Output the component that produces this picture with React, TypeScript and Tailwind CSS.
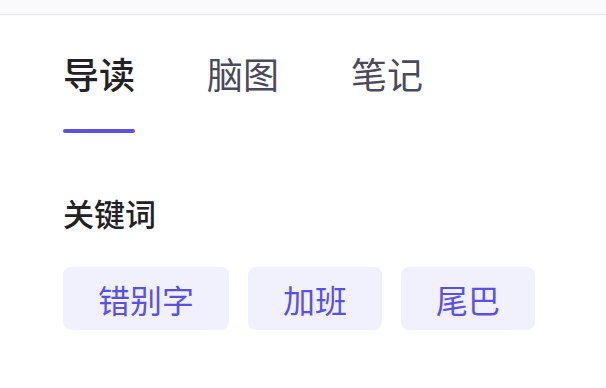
export default function App() {
  const font = { fontFamily: '"Noto Sans CJK SC", "Noto Sans", sans-serif' };
  return (
    <div className="w-[606px] h-[388px] bg-white overflow-hidden" style={font}>
      <div className="h-[15px] bg-[#fafafc] border-b border-[#e6e6ea]" />
      <div className="px-[63px]">
        <div className="flex gap-[72px] pt-[34px]">
          <div className="flex flex-col items-center">
            <span className="text-[36px] leading-[48px] font-medium text-[#222226]">导读</span>
            <div className="mt-[32px] w-[72px] h-[4px] rounded-full bg-[#5b52e2]" />
          </div>
          <span className="text-[36px] leading-[48px] text-[#4a4a5a]">脑图</span>
          <span className="text-[36px] leading-[48px] text-[#4a4a5a]">笔记</span>
        </div>
        <div className="mt-[60px] text-[31px] leading-[40px] font-medium text-[#222226]">关键词</div>
        <div className="flex gap-[19px] mt-[34px]">
          {["错别字", "加班", "尾巴"].map((t) => (
            <div key={t} className="h-[63px] px-[35px] rounded-[8px] bg-[#f1f0fd] flex items-center text-[32px] text-[#5b50e4]">
              {t}
            </div>
          ))}
        </div>
      </div>
    </div>
  );
}
